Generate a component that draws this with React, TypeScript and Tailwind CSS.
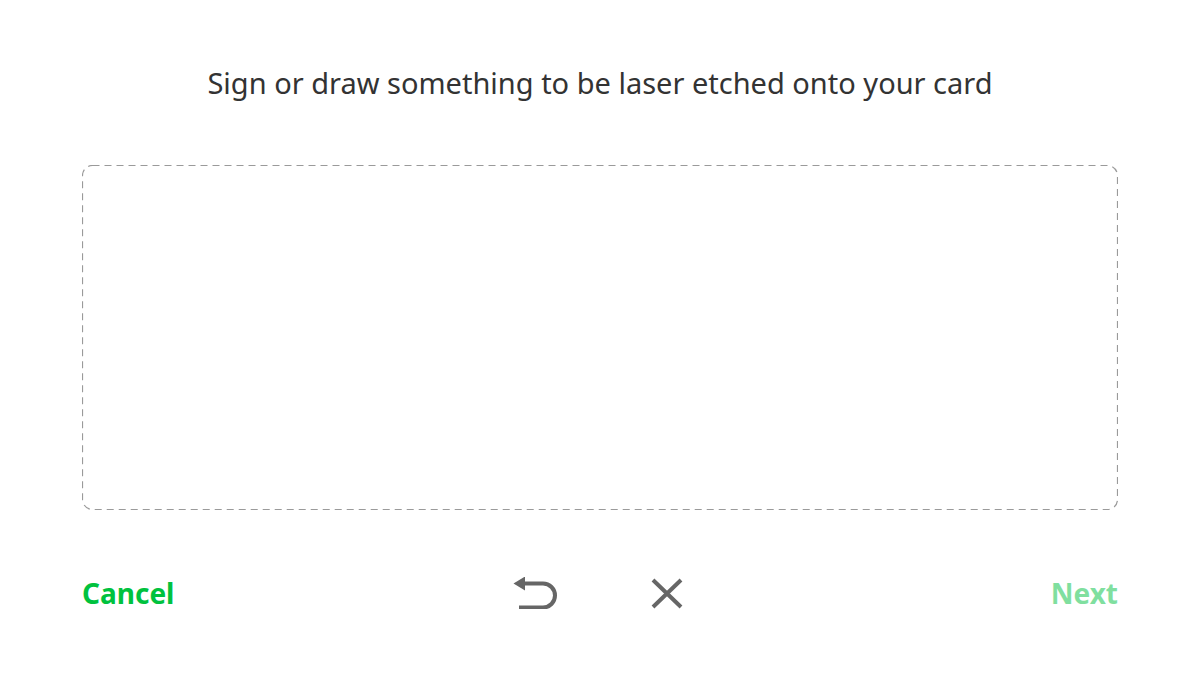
import React from "react";

export default function App() {
  return (
    <div className="w-[1200px] h-[674px] bg-white flex flex-col" style={{ fontFamily: "'Noto Sans', sans-serif" }}>
      <h1 className="mt-[65px] text-center text-[29px] leading-[36px] text-[#333333] font-normal">
        Sign or draw something to be laser etched onto your card
      </h1>
      <div className="relative mx-[82px] mt-[64px] h-[345px]">
        <svg className="absolute inset-0 w-full h-full" width="1036" height="345">
          <rect x="0.5" y="0.5" width="1035" height="344" rx="10" ry="10" fill="none" stroke="#9a9a9a" strokeWidth="1.2" strokeDasharray="7 5" />
        </svg>
      </div>
      <div className="mx-[82px] mt-[67px] grid grid-cols-[1fr_auto_1fr] items-center">
        <button className="justify-self-start text-[28px] font-bold text-[#00c23e] leading-none">Cancel</button>
        <div className="flex items-center gap-[93px] pr-[5px]">
          <svg width="45" height="32" viewBox="0 0 45 32" fill="none">
            <path d="M10 6.5 H30 A12 12 0 0 1 30 30.5 H6" stroke="#666666" strokeWidth="4" />
            <path d="M0.5 6.5 L12 -0.5 L12 13.5 Z" fill="#666666" />
          </svg>
          <svg width="32" height="31" viewBox="0 0 32 31" fill="none">
            <path d="M2 2 L30 29 M30 2 L2 29" stroke="#666666" strokeWidth="4" />
          </svg>
        </div>
        <button className="justify-self-end text-[28px] font-bold text-[#80df9f] leading-none">Next</button>
      </div>
    </div>
  );
}
